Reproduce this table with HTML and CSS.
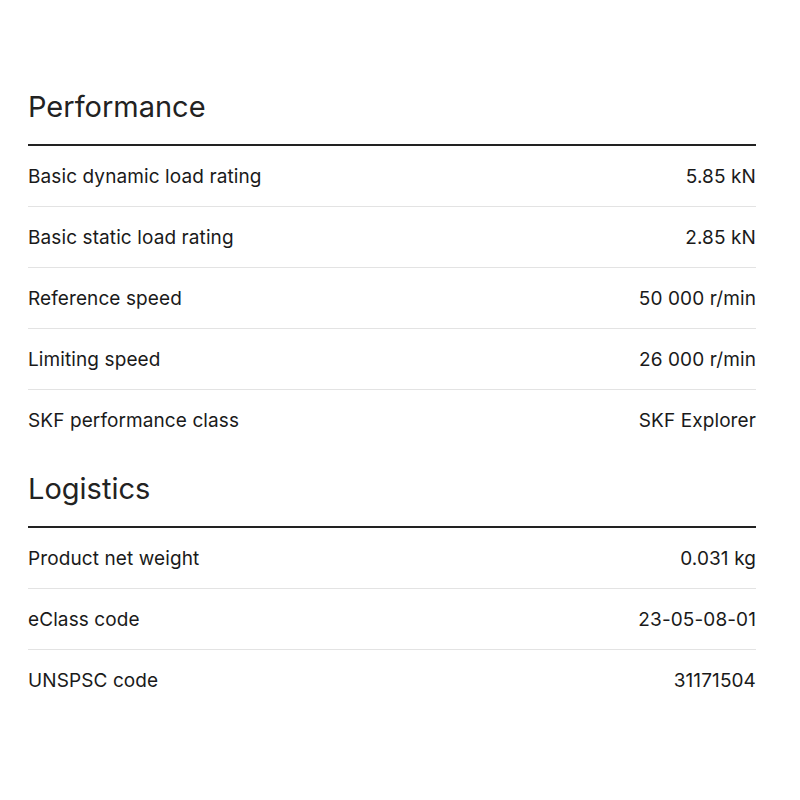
FILE: index.html
```html
<!DOCTYPE html>
<html lang="en">
<head>
    <meta charset="UTF-8">
    <meta name="viewport" content="width=device-width, initial-scale=1.0">
    <title>Specifications</title>
    <link rel="stylesheet" href="styles.css">
</head>
<body>
    <div class="specs">
        <section class="spec-group">
            <h2 class="spec-title">Performance</h2>
            <div class="spec-list">
                <div class="spec-row">
                    <span class="spec-label">Basic dynamic load rating</span>
                    <span class="spec-value">5.85 kN</span>
                </div>
                <div class="spec-row">
                    <span class="spec-label">Basic static load rating</span>
                    <span class="spec-value">2.85 kN</span>
                </div>
                <div class="spec-row">
                    <span class="spec-label">Reference speed</span>
                    <span class="spec-value">50 000 r/min</span>
                </div>
                <div class="spec-row">
                    <span class="spec-label">Limiting speed</span>
                    <span class="spec-value">26 000 r/min</span>
                </div>
                <div class="spec-row">
                    <span class="spec-label">SKF performance class</span>
                    <span class="spec-value">SKF Explorer</span>
                </div>
            </div>
        </section>

        <section class="spec-group">
            <h2 class="spec-title">Logistics</h2>
            <div class="spec-list">
                <div class="spec-row">
                    <span class="spec-label">Product net weight</span>
                    <span class="spec-value">0.031 kg</span>
                </div>
                <div class="spec-row">
                    <span class="spec-label">eClass code</span>
                    <span class="spec-value">23-05-08-01</span>
                </div>
                <div class="spec-row">
                    <span class="spec-label">UNSPSC code</span>
                    <span class="spec-value">31171504</span>
                </div>
            </div>
        </section>
    </div>
</body>
</html>
```

FILE: styles.css
```css
body {
    margin: 0;
    background: #fff;
    font-family: Inter, Roboto, sans-serif;
    color: #1a1a1a;
}
.specs {
    width: 728px;
    padding: 87px 0 0 28px;
}
.spec-group + .spec-group {
    margin-top: 19px;
}
.spec-title {
    margin: 0;
    font-size: 29px;
    line-height: 40px;
    font-weight: 400;
    color: #222;
    padding-bottom: 17px;
    border-bottom: 2px solid #222;
}
.spec-row {
    display: flex;
    justify-content: space-between;
    align-items: center;
    height: 60px;
    font-size: 19px;
    letter-spacing: 0.1px;
}
.spec-row + .spec-row {
    border-top: 1px solid #e3e3e3;
}
```
